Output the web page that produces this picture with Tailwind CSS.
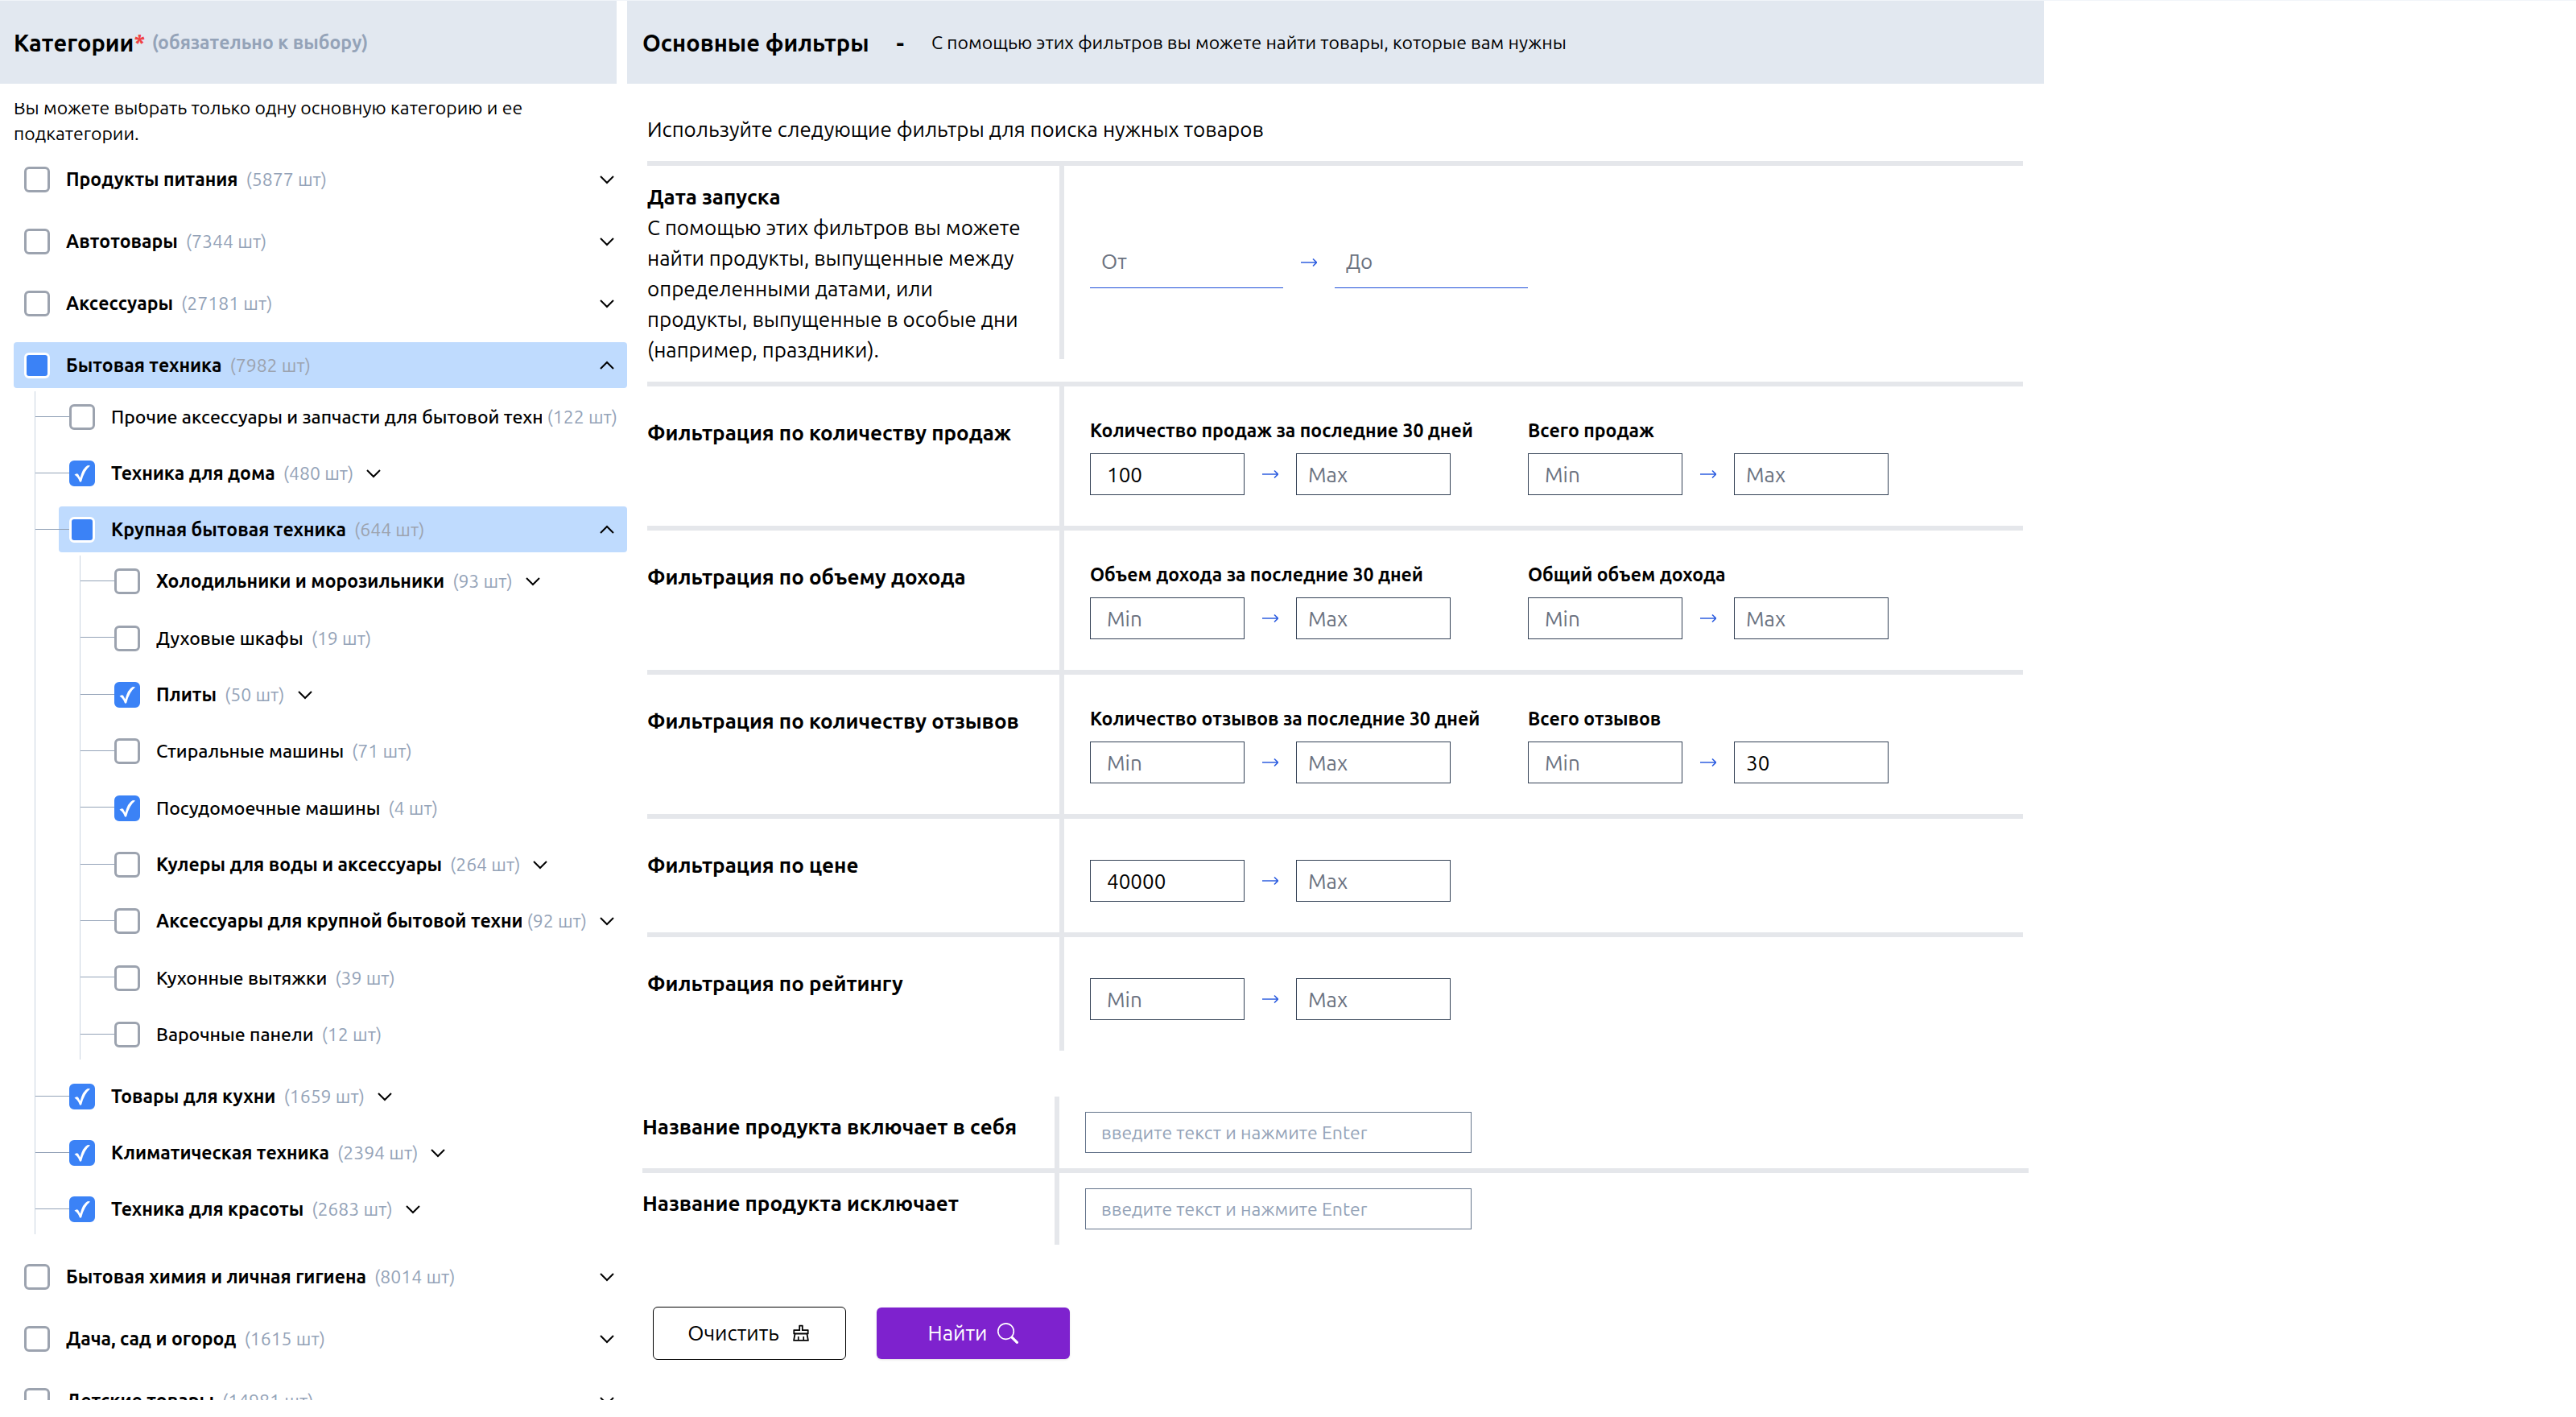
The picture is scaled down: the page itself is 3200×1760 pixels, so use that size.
<!DOCTYPE html>
<html lang="ru">
<head>
<meta charset="utf-8">
<meta name="viewport" content="width=device-width, initial-scale=1">
<title>Фильтры товаров</title>
<script src="https://cdn.jsdelivr.net/npm/@tailwindcss/browser@4"></script>
</head>
<body class="flex h-screen overflow-hidden border-t border-[#f1f5f9] bg-white font-['Ubuntu','Noto_Sans',sans-serif] text-[26px] leading-[38px] text-black">

<aside class="flex w-[779px] shrink-0 flex-col pb-[21px]">
  <header class="mr-[13px] flex h-[103px] items-center bg-[#e2e8f0] pl-[17px]">
    <h2 class="text-[29px] font-bold">Категории<span class="text-[#ef4444]">*</span></h2>
    <span class="ml-2 text-[23px] font-bold text-[#94a3b8]">(обязательно к выбору)</span>
  </header>
  <div class="mt-6 min-h-0 flex-1 overflow-hidden pl-[17px]">
    <p class="-mt-[10px] mb-3 max-w-[680px] text-[23px] leading-8">Вы можете выбрать только одну основную категорию и ее подкатегории.</p>
    <ul id="tree" class="flex flex-col gap-5"></ul>
  </div>
</aside>

<main class="max-w-[1760px] flex-1">
  <header class="flex h-[103px] items-center gap-[34px] bg-[#e2e8f0] pl-[19px]">
    <h1 class="text-[29px] font-bold">Основные фильтры</h1>
    <span class="text-[29px] font-bold">-</span>
    <p class="text-[23px]">С помощью этих фильтров вы можете найти товары, которые вам нужны</p>
  </header>

  <form class="pt-[38px]">
    <section class="mr-[26px] ml-[25px]">
      <p class="mb-5">Используйте следующие фильтры для поиска нужных товаров</p>
      <hr class="h-[6px] border-0 bg-[#e5e7eb]">
      <div class="flex">
        <div class="w-[512px] py-5 pr-8">
          <h3 class="font-bold">Дата запуска</h3>
          <p>С помощью этих фильтров вы можете найти продукты, выпущенные между определенными датами, или продукты, выпущенные в особые дни (например, праздники).</p>
        </div>
        <div class="h-60 w-[6px] bg-[#e5e7eb]"></div>
        <div class="flex h-60 items-center gap-[22px] pl-8">
          <input type="text" aria-label="Дата запуска от" placeholder="От" class="h-16 w-60 border-b border-[#1d4ed8] px-[14px] pb-[2px] placeholder:text-[#6b7280]">
          <svg class="h-5 w-5 text-[#2f5fe0]" viewBox="0 0 20 20" fill="none" stroke="currentColor" stroke-width="1.6"><path d="M0 10h20M15 5.500l4.500 4.500-4.500 4.500"/></svg>
          <input type="text" aria-label="Дата запуска до" placeholder="До" class="h-16 w-60 border-b border-[#1d4ed8] px-[14px] pb-[2px] placeholder:text-[#6b7280]">
        </div>
      </div>
      <div id="ranges"></div>
    </section>

    <section class="mx-[19px] mt-[57px]">
      <div class="flex">
        <label for="inc" class="w-[512px] pt-[19px] font-bold">Название продукта включает в себя</label>
        <div class="w-[6px] bg-[#e5e7eb]"></div>
        <div class="py-[19px] pl-8"><input id="inc" type="text" placeholder="введите текст и нажмите Enter" class="block h-[51px] w-[480px] border border-[#64748b] px-[19px] text-[23px] placeholder:text-[#94a3b8]"></div>
      </div>
      <hr class="h-[6px] border-0 bg-[#e5e7eb]">
      <div class="flex">
        <label for="exc" class="w-[512px] pt-[19px] font-bold">Название продукта исключает</label>
        <div class="w-[6px] bg-[#e5e7eb]"></div>
        <div class="py-[19px] pl-8"><input id="exc" type="text" placeholder="введите текст и нажмите Enter" class="block h-[51px] w-[480px] border border-[#64748b] px-[19px] text-[23px] placeholder:text-[#94a3b8]"></div>
      </div>
    </section>

    <div class="mt-[77px] ml-8 flex items-center gap-[38px]">
      <button type="button" class="flex h-[66px] w-60 items-center justify-center gap-[14px] rounded-md border border-black">Очистить
        <svg class="h-[26px] w-[26px]" viewBox="0 0 1024 1024" fill="currentColor"><path d="M899.1 869.6l-53-305.6H864c14.400 0 26-11.600 26-26V346c0-14.400-11.600-26-26-26H618V138c0-14.400-11.600-26-26-26H432c-14.400 0-26 11.600-26 26v182H160c-14.400 0-26 11.600-26 26v192c0 14.400 11.600 26 26 26h17.900l-53 305.600a25.950 25.950 0 0025.600 30.400h723c1.500 0 3-.1 4.400-.4a25.880 25.880 0 0021.200-30zM204 390h272V182h72v208h272v104H204V390zm468 440V674c0-4.400-3.600-8-8-8h-48c-4.400 0-8 3.600-8 8v156H416V674c0-4.400-3.600-8-8-8h-48c-4.400 0-8 3.600-8 8v156H202.800l45.100-260H776l45.100 260H672z"/></svg>
      </button>
      <button type="submit" class="flex h-16 w-60 items-center justify-center gap-[13px] rounded-md bg-[#7e22ce] text-white shadow-sm">Найти
        <svg class="h-[26px] w-[26px]" viewBox="0 0 16 16" fill="currentColor"><path d="M11.742 10.344a6.500 6.500 0 1 0-1.397 1.398h-.001c.03.04.062.078.098.115l3.850 3.850a1 1 0 0 0 1.415-1.414l-3.850-3.850a1.007 1.007 0 0 0-.115-.1zM12 6.500a5.500 5.500 0 1 1-11 0 5.500 5.500 0 0 1 11 0z"/></svg>
      </button>
    </div>
  </form>
</main>

<script>
// s: "" empty, "c" checked, "i" partly selected; k: has subcategories
const tree = [
  {n:'Продукты питания', q:5877, k:1}, {n:'Автотовары', q:7344, k:1}, {n:'Аксессуары', q:27181, k:1},
  {n:'Бытовая техника', q:7982, k:1, s:'i', c:[
    {n:'Прочие аксессуары и запчасти для бытовой техники', q:122},
    {n:'Техника для дома', q:480, k:1, s:'c'},
    {n:'Крупная бытовая техника', q:644, k:1, s:'i', c:[
      {n:'Холодильники и морозильники', q:93, k:1}, {n:'Духовые шкафы', q:19}, {n:'Плиты', q:50, k:1, s:'c'},
      {n:'Стиральные машины', q:71}, {n:'Посудомоечные машины', q:4, s:'c'}, {n:'Кулеры для воды и аксессуары', q:264, k:1},
      {n:'Аксессуары для крупной бытовой техники', q:92, k:1}, {n:'Кухонные вытяжки', q:39}, {n:'Варочные панели', q:12}]},
    {n:'Товары для кухни', q:1659, k:1, s:'c'}, {n:'Климатическая техника', q:2394, k:1, s:'c'}, {n:'Техника для красоты', q:2683, k:1, s:'c'}]},
  {n:'Бытовая химия и личная гигиена', q:8014, k:1}, {n:'Дача, сад и огород', q:1615, k:1}, {n:'Детские товары', q:14981, k:1}];
let id = 0;
function node(x, depth) {
  const cid = 'cat' + (++id), right = depth === 0 || x.c;
  const row = `<div class="flex h-[57px] items-center rounded-sm pr-3 pl-[13px] ${x.c ? 'bg-[#bfdbfe]' : ''}">
    <span class="mr-5 grid h-8 w-8 shrink-0">
      <input id="${cid}" type="checkbox" ${x.s === 'c' ? 'checked' : ''} ${x.s === 'i' ? 'data-partial' : ''} class="peer h-8 w-8 appearance-none rounded-md border-3 border-[#9ca3af] bg-white [grid-area:1/1] checked:border-[#3b82f6] checked:bg-[#3b82f6] indeterminate:border-white indeterminate:bg-[#3b82f6]">
      <svg class="pointer-events-none hidden h-8 w-8 text-white [grid-area:1/1] peer-checked:block" viewBox="0 0 32 32" fill="currentColor"><path d="M6.500 17.800Q9 15.200 11 16.800L13.600 21.500Q16.500 9.500 22.500 6.300Q24.500 5.400 26 6.500Q18.500 12.500 15.200 26Q13.500 27.800 12.600 25.500Q10.500 19.800 6.500 17.800Z"/></svg>
    </span>
    <label for="${cid}" class="min-w-0 overflow-hidden pr-1 whitespace-nowrap text-[23px] leading-8 ${x.k ? 'font-bold' : 'font-medium'}">${x.n}</label>
    <span class="ml-[6px] shrink-0 text-[23px] leading-8 ${x.c ? 'text-[#9ca3af]' : 'text-[#94a3b8]'}">(${x.q} шт)</span>
    ${x.k ? `<button type="button" aria-label="${x.n}" aria-expanded="${!!x.c}" class="${right ? 'ml-auto' : 'ml-3'} shrink-0"><svg class="h-[26px] w-[26px] ${x.c ? 'rotate-180' : ''}" viewBox="0 0 26 26" fill="none" stroke="currentColor" stroke-width="2"><path d="M5 9l8 8 8-8"/></svg></button>` : ''}
  </div>`;
  if (depth === 0) return `<li>${row}${kids(x, 1)}</li>`;
  return `<li class="relative pl-[29px] ${depth === 2 ? 'nth-[3n+2]:pt-px' : ''}">${row}<span class="absolute top-7 left-0 h-px w-[42px] bg-[#94a3b8]"></span>${kids(x, depth + 1)}</li>`;
}
function kids(x, depth) {
  return x.c ? `<ul class="mt-1 mb-1 ml-[26px] flex flex-col gap-[13px] border-l border-[#cbd5e1] pt-[3px] pb-[3px]">${x.c.map(y => node(y, depth)).join('')}</ul>` : '';
}
document.getElementById('tree').innerHTML = tree.map(x => node(x, 0)).join('');
document.querySelectorAll('[data-partial]').forEach(e => e.indeterminate = true);

const ranges = [
  ['Фильтрация по количеству продаж', [['Количество продаж за последние 30 дней','100',''],['Всего продаж','','']]],
  ['Фильтрация по объему дохода', [['Объем дохода за последние 30 дней','',''],['Общий объем дохода','','']]],
  ['Фильтрация по количеству отзывов', [['Количество отзывов за последние 30 дней','',''],['Всего отзывов','','30']]],
  ['Фильтрация по цене', [['','40000','']]],
  ['Фильтрация по рейтингу', [['','','']]]];
document.getElementById('ranges').innerHTML = ranges.map(([title, groups], i) => `
  <hr class="h-[6px] border-0 bg-[#e5e7eb]">
  <div class="flex">
    <h3 class="w-[512px] pt-[39px] font-bold">${title}</h3>
    <div class="w-[6px] bg-[#e5e7eb]"></div>
    <div class="flex gap-24 pt-[39px] pb-[38px] pl-8">${groups.map(([label, a, b], j) => `
      <div>
        ${label ? `<label for="r${i}${j}" class="block w-0 whitespace-nowrap text-[23px] leading-8 font-bold">${label}</label>` : ''}
        <div class="mt-3 flex items-center gap-[22px]">
          <input id="r${i}${j}" type="text" aria-label="${label || title} min" placeholder="Min" value="${a}" class="h-[52px] w-48 border border-[#334155] px-5 placeholder:text-[#6b7280]">
          <svg class="h-5 w-5 text-[#2f5fe0]" viewBox="0 0 20 20" fill="none" stroke="currentColor" stroke-width="1.6"><path d="M0 10h20M15 5.500l4.500 4.500-4.500 4.500"/></svg>
          <input type="text" aria-label="${label || title} max" placeholder="Max" value="${b}" class="h-[52px] w-48 border border-[#334155] px-[14px] placeholder:text-[#6b7280]">
        </div>
      </div>`).join('')}
    </div>
  </div>`).join('');
</script>
</body>
</html>
